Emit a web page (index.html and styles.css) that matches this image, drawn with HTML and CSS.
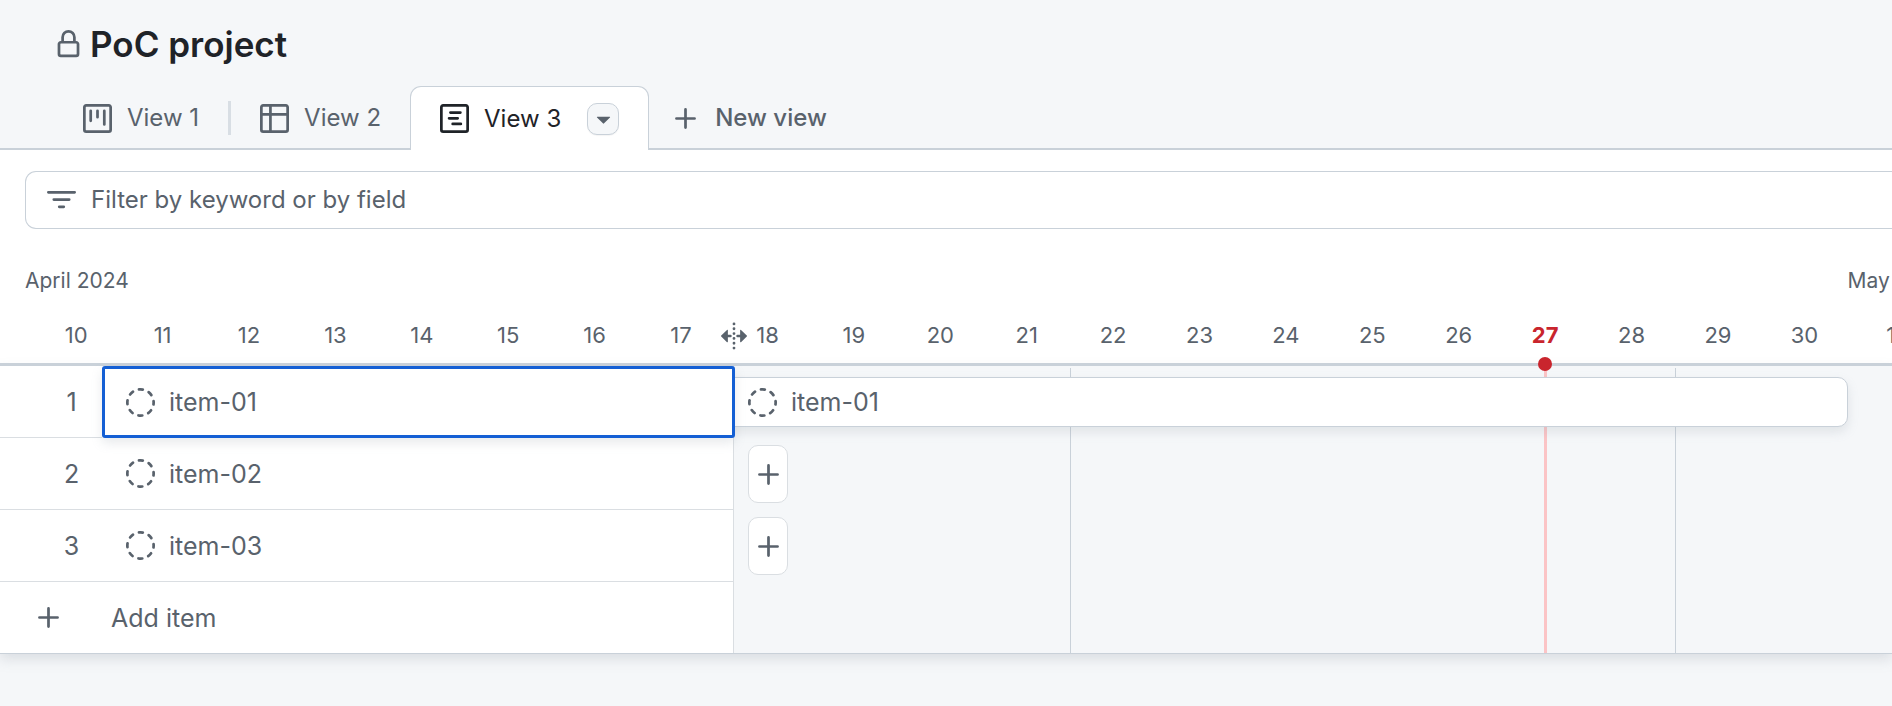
FILE: index.html
```html
<!DOCTYPE html>
<html lang="en">
<head>
<meta charset="utf-8">
<title>PoC project</title>
<link rel="stylesheet" href="styles.css">
</head>
<body>
<svg class="sprite" aria-hidden="true">
  <symbol id="lock" viewBox="0 0 16 16"><path d="M4 4a4 4 0 0 1 8 0v2h.25c.966 0 1.75.784 1.75 1.75v5.5A1.75 1.75 0 0 1 12.25 15h-8.5A1.75 1.75 0 0 1 2 13.25v-5.5C2 6.784 2.784 6 3.75 6H4Zm8.25 3.5h-8.5a.25.25 0 0 0-.25.25v5.5c0 .138.112.25.25.25h8.5a.25.25 0 0 0 .25-.25v-5.5a.25.25 0 0 0-.25-.25ZM10.5 6V4a2.5 2.5 0 1 0-5 0v2Z"/></symbol>
  <symbol id="board" viewBox="0 0 16 16"><path d="M1.75 0h12.5C15.216 0 16 .784 16 1.75v12.5A1.75 1.75 0 0 1 14.25 16H1.75A1.75 1.75 0 0 1 0 14.25V1.75C0 .784.784 0 1.75 0ZM1.5 1.75v12.5c0 .138.112.25.25.25h12.5a.25.25 0 0 0 .25-.25V1.75a.25.25 0 0 0-.25-.25H1.75a.25.25 0 0 0-.25.25ZM11.75 3a.75.75 0 0 1 .75.75v7.5a.75.75 0 0 1-1.5 0v-7.5a.75.75 0 0 1 .75-.75Zm-8.25.75a.75.75 0 0 1 1.5 0v5.5a.75.75 0 0 1-1.5 0ZM8 3a.75.75 0 0 1 .75.75v3.5a.75.75 0 0 1-1.5 0v-3.5A.75.75 0 0 1 8 3Z"/></symbol>
  <symbol id="table" viewBox="0 0 16 16"><path d="M0 1.75C0 .784.784 0 1.75 0h12.5C15.216 0 16 .784 16 1.75v12.5A1.75 1.75 0 0 1 14.25 16H1.75A1.75 1.75 0 0 1 0 14.25ZM6.5 6.5v8h7.75a.25.25 0 0 0 .25-.25V6.5Zm8-1.5V1.75a.25.25 0 0 0-.25-.25H6.5V5Zm-13 1.5v7.75c0 .138.112.25.25.25H5v-8ZM5 5V1.5H1.75a.25.25 0 0 0-.25.25V5Z"/></symbol>
  <symbol id="roadmap" viewBox="0 0 16 16"><path d="M1.75 0h12.5C15.216 0 16 .784 16 1.75v12.5A1.75 1.75 0 0 1 14.25 16H1.75A1.75 1.75 0 0 1 0 14.25V1.75C0 .784.784 0 1.75 0ZM1.5 1.75v12.5c0 .138.112.25.25.25h12.5a.25.25 0 0 0 .25-.25V1.75a.25.25 0 0 0-.25-.25H1.75a.25.25 0 0 0-.25.25Z"/><path class="stroke" d="M5.75 4.75h5.5M5 7.9h4.75M7 11h4.5"/></symbol>
  <symbol id="plus" viewBox="0 0 16 16"><path class="stroke" d="M8 3v10M3 8h10"/></symbol>
  <symbol id="caret" viewBox="0 0 16 16"><path d="m4.427 7.427 3.396 3.396a.25.25 0 0 0 .354 0l3.396-3.396A.25.25 0 0 0 11.396 7H4.604a.25.25 0 0 0-.177.427Z"/></symbol>
  <symbol id="filter" viewBox="0 0 16 16"><path class="stroke" d="M.75 3.5h14.5M3.75 7.5h8.5M6.75 11.5h2.5"/></symbol>
  <symbol id="draft" viewBox="0 0 16 16"><circle class="stroke dashes" cx="8" cy="8" r="7.25"/></symbol>
  <symbol id="resize" viewBox="0 0 16 16"><path class="dots" d="M8 1.1v14"/><path d="M.7 7.7 4 4.5a.3.3 0 0 1 .5.2v2.6H6a.7.7 0 0 1 0 1.4H4.5v2.6a.3.3 0 0 1-.5.2L.7 8.3a.4.4 0 0 1 0-.6ZM15.3 7.7 12 4.5a.3.3 0 0 0-.5.2v2.6H10a.7.7 0 0 0 0 1.4h1.5v2.6a.3.3 0 0 0 .5.2l3.3-3.2a.4.4 0 0 0 0-.6Z"/></symbol>
</svg>

<header class="project-header">
  <div class="title-row">
    <svg class="icon"><use href="#lock"/></svg>
    <h1 class="title">PoC project</h1>
  </div>
  <nav class="tabs" aria-label="Views">
    <a class="tab" href="#view-1"><svg class="icon"><use href="#board"/></svg>View 1</a>
    <span class="tab-divider"></span>
    <a class="tab" href="#view-2"><svg class="icon"><use href="#table"/></svg>View 2</a>
    <div class="tab tab-active">
      <a class="tab-link" href="#view-3" aria-current="page"><svg class="icon"><use href="#roadmap"/></svg>View 3</a>
      <button class="tab-menu" type="button" aria-label="View options"><svg class="icon"><use href="#caret"/></svg></button>
    </div>
    <button class="new-view" type="button"><svg class="icon"><use href="#plus"/></svg>New view</button>
  </nav>
</header>

<main class="view">
  <div class="filter-area">
    <label class="filter">
      <svg class="icon"><use href="#filter"/></svg>
      <input class="filter-input" type="text" placeholder="Filter by keyword or by field" aria-label="Filter by keyword or by field">
    </label>
  </div>

  <section class="roadmap">
    <div class="calendar">
      <div class="months day-grid">
        <span class="month month-first">April 2024</span>
        <span class="month month-next">May</span>
      </div>
      <div class="days day-grid">
        <span>10</span><span>11</span><span>12</span><span>13</span><span>14</span><span>15</span><span>16</span><span>17</span><span>18</span><span>19</span><span>20</span><span>21</span><span>22</span><span>23</span><span>24</span><span>25</span><span>26</span><span class="today">27</span><span>28</span><span>29</span><span>30</span><span>1</span>
      </div>
      <svg class="resize-handle"><use href="#resize"/></svg>
    </div>

    <div class="board">
      <div class="timeline day-grid">
        <div class="week-line week-a"></div>
        <div class="today-line"></div>
        <div class="week-line week-b"></div>
        <div class="bar"></div>
      </div>
      <div class="bar-labels">
        <div class="bar-row"><svg class="icon"><use href="#draft"/></svg>item-01</div>
        <div class="bar-row"><button class="add-date" type="button" aria-label="Add date to item-02"><svg class="icon"><use href="#plus"/></svg></button></div>
        <div class="bar-row"><button class="add-date" type="button" aria-label="Add date to item-03"><svg class="icon"><use href="#plus"/></svg></button></div>
      </div>
      <div class="panel">
        <table class="items">
          <tbody>
            <tr><td class="num">1</td><td class="item selected"><div class="item-name"><svg class="icon"><use href="#draft"/></svg>item-01</div></td></tr>
            <tr><td class="num">2</td><td class="item"><div class="item-name"><svg class="icon"><use href="#draft"/></svg>item-02</div></td></tr>
            <tr><td class="num">3</td><td class="item"><div class="item-name"><svg class="icon"><use href="#draft"/></svg>item-03</div></td></tr>
          </tbody>
        </table>
        <button class="add-item" type="button"><svg class="icon"><use href="#plus"/></svg>Add item</button>
      </div>
    </div>
  </section>
</main>
</body>
</html>
```

FILE: styles.css
```css
:root {
  --canvas: #f5f7f9;
  --muted: #59626c;
  --ink: #1f2328;
  --line: #c9d1d9;
  --line-soft: #dadee2;
  --accent: #145fd4;
  --danger: #c9252d;
  --panel-width: 734px;
}

* {
  box-sizing: border-box;
}

body {
  margin: 0;
  min-height: 100vh;
  background: var(--canvas);
  color: var(--muted);
  font-family: Inter, "Noto Sans", sans-serif;
  font-size: 25px;
  line-height: 32px;
  overflow-x: hidden;
}

button {
  font: inherit;
  color: inherit;
  background: none;
  border: 0;
  padding: 0;
}

a {
  color: inherit;
  text-decoration: none;
}

.sprite {
  display: none;
}

.icon {
  flex: none;
  display: block;
  width: 29px;
  height: 29px;
  fill: currentColor;
}

.stroke {
  fill: none;
  stroke: currentColor;
  stroke-width: 1.5;
  stroke-linecap: round;
}

.dashes {
  stroke-dasharray: 2.2 3.494;
  stroke-dashoffset: 1.1;
}

.dots {
  fill: none;
  stroke: currentColor;
  stroke-width: 1.6;
  stroke-linecap: round;
  stroke-dasharray: 0 2.76;
}

/* Header and view tabs */

.project-header {
  padding-top: 22px;
  background: linear-gradient(var(--line), var(--line)) bottom / 100% 2px no-repeat;
}

.title-row {
  display: flex;
  align-items: center;
  gap: 7px;
  padding-left: 54px;
}

.title {
  margin: 0;
  color: var(--ink);
  font-size: 35px;
  font-weight: 600;
  line-height: 44px;
}

.tabs {
  display: flex;
  align-items: center;
  margin-top: 20px;
  padding-left: 54px;
  font-size: 24px;
}

.tab,
.tab-link {
  display: flex;
  align-items: center;
  gap: 15px;
  white-space: nowrap;
}

.tab {
  height: 64px;
  padding: 0 29px;
}

.tab-divider {
  width: 3px;
  height: 34px;
  background: #d8dee4;
}

.tab-active {
  gap: 26px;
  color: var(--ink);
  background: #fff;
  border: 1px solid var(--line);
  border-bottom: 0;
  border-radius: 11px 11px 0 0;
}

.tab-menu {
  display: grid;
  place-items: center;
  width: 32px;
  height: 32px;
  color: var(--muted);
  background: var(--canvas);
  border: 1px solid var(--line);
  border-radius: 10px;
  box-shadow: 0 1px 1px #1f23280d;
}

.new-view {
  display: flex;
  align-items: center;
  gap: 15px;
  padding: 0 22px;
  font-weight: 500;
}

/* Filter bar */

.view {
  background: #fff;
}

.filter-area {
  padding: 21px 0 0 25px;
}

.filter {
  display: flex;
  align-items: center;
  gap: 15px;
  height: 58px;
  padding-left: 21px;
  border: 1px solid var(--line);
  border-right: 0;
  border-radius: 11px 0 0 11px;
  font-size: 24px;
}

.filter-input {
  flex: 1;
  min-width: 0;
  padding: 0;
  border: 0;
  outline: 0;
  background: none;
  color: var(--ink);
  font: inherit;
}

.filter-input::placeholder {
  color: var(--muted);
  opacity: 1;
}

/* Calendar: every layer shares the same 22-day grid */

.roadmap {
  overflow-x: clip;
}

.day-grid {
  display: grid;
  grid-template-columns: repeat(22, minmax(0, 1fr));
  margin-left: 33px;
  margin-right: -42px;
}

.calendar {
  position: relative;
  padding-top: 36px;
  font-size: 22px;
  border-bottom: 3px solid var(--line);
}

.months {
  font-size: 21px;
}

.month {
  grid-row: 1;
  white-space: nowrap;
}

.month-first {
  grid-column: 1 / 8;
  margin-left: -8px;
}

.month-next {
  grid-column: 22;
}

.days {
  padding: 22px 0 12px;
  text-align: center;
}

.today {
  position: relative;
  color: var(--danger);
  font-weight: 700;
}

.today::after {
  content: "";
  position: absolute;
  left: calc(50% - 7px);
  top: 38px;
  width: 14px;
  height: 14px;
  border-radius: 50%;
  background: var(--danger);
}

.resize-handle {
  position: absolute;
  left: calc(var(--panel-width) - 14px);
  bottom: 13px;
  width: 28px;
  height: 28px;
  fill: currentColor;
}

/* Board: timeline and item panel stacked in one cell */

.board {
  display: grid;
  background: var(--canvas);
  border-bottom: 1px solid var(--line);
  box-shadow: 0 5px 12px #8c959f40;
}

.timeline,
.panel,
.bar-labels {
  grid-area: 1 / 1;
}

.timeline {
  grid-template-rows: 72px 1fr;
}

.week-line,
.today-line {
  grid-row: 1 / 3;
}

.week-line {
  margin-top: 2px;
  border-left: 1px solid var(--line);
}

.week-a {
  grid-column: 13;
}

.week-b {
  grid-column: 20;
}

.today-line {
  grid-column: 18;
  justify-self: center;
  width: 3px;
  background: #fbc4c6;
}

.bar {
  grid-area: 1 / 8 / 2 / 22;
  z-index: 1;
  align-self: center;
  height: 50px;
  background: #fff;
  border: 1px solid var(--line);
  border-radius: 10px;
  box-shadow: 0 5px 11px #8c959f33;
}

.bar-labels {
  z-index: 2;
  padding-left: calc(var(--panel-width) + 14px);
}

.bar-row {
  display: flex;
  align-items: center;
  gap: 14px;
  height: 72px;
}

.add-date {
  display: grid;
  place-items: center;
  width: 40px;
  height: 58px;
  background: #fff;
  border: 1px solid var(--line-soft);
  border-radius: 10px;
}

.panel {
  z-index: 3;
  width: var(--panel-width);
  background: #fff;
  border-right: 1px solid var(--line-soft);
}

.items {
  width: 100%;
  border-collapse: separate;
  border-spacing: 0;
  table-layout: fixed;
}

.items td {
  height: 72px;
  padding: 0;
  border-bottom: 1px solid var(--line-soft);
}

.items .num {
  width: 102px;
  padding-left: 41px;
  text-align: center;
}

.items .item {
  padding-left: 24px;
}

.items .selected {
  position: relative;
  border: 0;
}

.selected::after {
  content: "";
  position: absolute;
  inset: 0 -2px 0 0;
  border: 3px solid var(--accent);
  border-radius: 3px;
  box-shadow: 0 5px 11px #8c959f33;
}

.item-name {
  display: flex;
  align-items: center;
  gap: 14px;
}

.add-item {
  display: flex;
  align-items: center;
  gap: 48px;
  width: 100%;
  height: 71px;
  padding-left: 34px;
}
```
